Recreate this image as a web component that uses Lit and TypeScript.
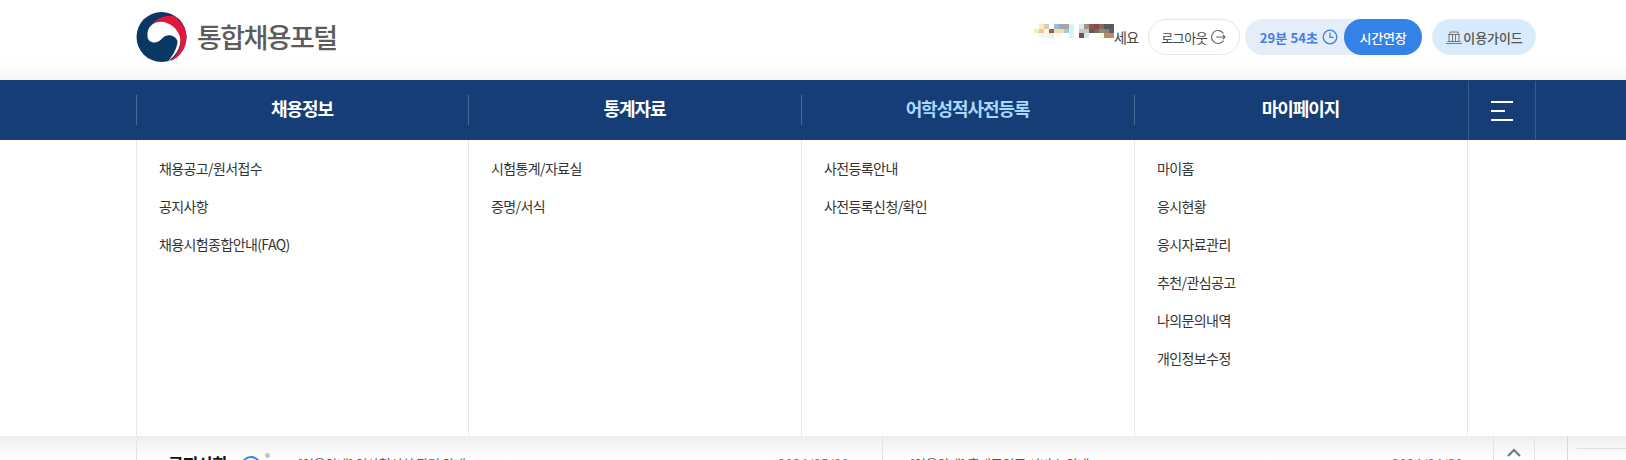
import { LitElement, html, css, svg } from "lit";
import { customElement } from "lit/decorators.js";

const COLS = [
  { title: "채용정보", items: ["채용공고/원서접수", "공지사항", "채용시험종합안내(FAQ)"] },
  { title: "통계자료", items: ["시험통계/자료실", "증명/서식"] },
  { title: "어학성적사전등록", active: true, items: ["사전등록안내", "사전등록신청/확인"] },
  { title: "마이페이지", items: ["마이홈", "응시현황", "응시자료관리", "추천/관심공고", "나의문의내역", "개인정보수정"] },
];

const MOSAIC = [
  "#fff #fbe9c4 #d9cfae #fff #8ebfe6 #a5a5a5 #a5a5a5 #d5f3f0 #fff #cfeff5 #a88c7c #8c5a52 #8a4a4a #8a6a60 #5a5a5a #5a5a5a",
  "#fde3b8 #f9c78e #fff #96604e #fcd9a2 #fcd9a2 #9bcdf2 #cff7ec #fff #c8c8c8 #c8c8c8 #7d5048 #6e6e6e #888 #8e7e74 #5a5a8a",
  "#fff #f0f8ff #fff5e0 #cff7ff #fff #fff #fff #d8f8ee #fff #7a5048 #c8eefc #fff #fff #fff9cc #c08a5a #c08a5a",
];

@customElement("app-root")
export class AppRoot extends LitElement {
  static styles = css`
    :host {
      display: block;
      width: 1626px;
      height: 460px;
      overflow: hidden;
      background: #fff;
      font-family: "Noto Sans CJK KR", "Noto Sans", sans-serif;
      color: #333;
    }
    .top {
      height: 80px;
      box-sizing: border-box;
      padding: 0 90px 0 136px;
      display: flex;
      align-items: center;
      background: linear-gradient(#fff 0, #fff 58px, #f6f6f6 80px);
    }
    .logo { display: flex; align-items: center; gap: 10px; margin-top: -6px; }
    .logo svg { display: block; }
    .logo span {
      font-size: 27px;
      font-weight: 500;
      color: #5c5c5c;
      letter-spacing: -1.6px;
      line-height: 40px;
    }
    .tools { margin-left: auto; display: flex; align-items: center; margin-top: -6px; }
    .hello { display: flex; align-items: center; font-size: 14px; letter-spacing: -0.5px; color: #444; }
    .mosaic { display: grid; grid-template-columns: repeat(16, 5px); grid-auto-rows: 4.5px; margin: -12px 0 0 0; }
    .mosaic i { display: block; }
    .pill {
      height: 36px;
      box-sizing: border-box;
      border-radius: 18px;
      display: flex;
      align-items: center;
      font-size: 13px;
      letter-spacing: -0.5px;
      white-space: nowrap;
    }
    .logout { margin-left: 9px; width: 92px; justify-content: center; gap: 3px; border: 1px solid #e6e6e6; background: #fff; color: #444; }
    .session { margin-left: 5px; background: #e5edf8; color: #3f7fe6; font-weight: 700; padding-left: 15px; letter-spacing: 0.1px; }
    .session svg { margin-left: 4px; }
    .extend {
      margin-left: 6px; width: 78px; height: 36px; border-radius: 18px; background: #3481e8; color: #fff;
      display: flex; align-items: center; justify-content: center; font-weight: 500; letter-spacing: -0.2px;
    }
    .guide { margin-left: 10px; width: 104px; justify-content: center; background: #d8ebfd; border: 1px solid #e2eefa; color: #555; font-weight: 500; letter-spacing: -0.1px; }
    nav {
      height: 60px;
      background: #163d75;
      padding-left: 136px;
      display: flex;
    }
    .nav-cols { display: grid; grid-template-columns: 332px 333px 333px 333px; }
    .nav-cols > div {
      display: flex; align-items: center; justify-content: center;
      position: relative;
      box-sizing: border-box;
      padding-bottom: 4px;
      color: #fff; font-size: 18px; font-weight: 700; letter-spacing: -1.1px;
    }
    .nav-cols > div::before {
      content: ""; position: absolute; left: 0; top: 15px; height: 30px; width: 1px; background: #4a6894;
    }
    .nav-cols > div.active { color: #a9d8ff; }
    .burger {
      margin-left: 1px; height: 59px; margin-top: 1px;
      border-left: 1px solid #3a5b8c; border-right: 1px solid #3a5b8c;
      display: flex; flex-direction: column; justify-content: center; gap: 7px; padding-left: 22px; box-sizing: content-box; width: 44px;
    }
    .burger i { display: block; height: 2px; background: #fff; width: 22px; }
    .burger i.short { width: 14px; }
    .menu {
      height: 296px; padding-left: 136px; display: grid;
      grid-template-columns: 332px 333px 333px 333px 1px; background: #fff;
    }
    .menu > div {
      border-left: 1px solid #e8e8e8; padding: 9px 0 0 22px; display: flex; flex-direction: column;
      box-sizing: border-box;
    }
    .menu a {
      height: 38px; line-height: 38px; font-size: 14px; color: #333; letter-spacing: -0.6px; white-space: nowrap;
    }
    .below {
      height: 24px; overflow: hidden; display: flex; padding-left: 136px;
      background: linear-gradient(#eeeeee, #ffffff);
    }
    .card {
      width: 1399px; height: 60px; box-sizing: border-box; flex: none;
      border-left: 1px solid #e2e2e2; border-right: 1px solid #e2e2e2; border-radius: 8px 8px 0 0; display: flex;
      font-size: 13px; color: #444;
    }
    .half {
      box-sizing: border-box; height: 60px; padding-top: 18px; display: flex;
      align-items: flex-start; line-height: 20px; white-space: nowrap;
    }
    .half.one { width: 746px; padding-left: 31px; border-right: 1px solid #e2e2e2; }
    .half.two { width: 611px; padding-left: 27px; border-right: 1px solid #e2e2e2; }
    .heading { font-size: 17px; font-weight: 700; color: #111; letter-spacing: -0.8px; width: 73px; line-height: 20px; }
    .ring { width: 20px; height: 20px; box-sizing: border-box; border: 2px solid #3f7fe6; border-radius: 50%; flex: none; margin: 2px 0 0 0; }
    .dot { width: 5px; height: 5px; border-radius: 50%; background: #c4c4c4; flex: none; margin: -1px 0 0 4px; }
    .subject { letter-spacing: -0.3px; color: #555; }
    .date { margin-left: auto; color: #777; letter-spacing: 0.3px; }
    .one .subject { margin-left: 28px; }
    .one .date { margin-right: 33px; }
    .two .date { margin-right: 30px; }
    .up { flex: 1; display: flex; justify-content: center; padding-top: 11px; }
    .side { margin-left: 32px; flex: 1; border-left: 1px solid #d8d8d8; padding: 12px 0 0 9px; }
    .side i { display: block; height: 1px; background: #e0e0e0; }
  `;
  render() {
    return html`
      <div class="top">
        <div class="logo">
          <svg width="51" height="50" viewBox="0 0 50 50">
            <circle cx="25" cy="25" r="25" fill="#0b3763" />
            <path d="M11 24 C10 15 17 9.5 25 9.5 C35 9.5 43 16 44 26 C44.5 36 39 44 32 48.5 C36 44 41 36 41 29 C39 24 33 22 29 24 C25 26 24 30 18 30.5 C14 30.5 11 28 11 24 Z" fill="#fff" />
            <path d="M15 12.5 C20 6 30 3 37 4 C46 10 50 18 50 25 C50 36 43 46 34 49 C42 42 45.5 33 43.5 25 C41 15 30 8.5 22 9.5 C19 10 17 11 15 12.5 Z" fill="#e1183c" />
          </svg>
          <span>통합채용포털</span>
        </div>
        <div class="tools">
          <div class="hello">
            <div class="mosaic">
              ${MOSAIC.flatMap((r) => r.split(" ")).map((c) => html`<i style="background:${c}"></i>`)}
            </div>
            <span>세요</span>
          </div>
          <div class="pill logout">
            <span>로그아웃</span>
            ${svg`<svg width="16" height="16" viewBox="0 0 16 16" fill="none" stroke="#666" stroke-width="1.2"><path d="M13.5 4.5A6.5 6.5 0 1 0 13.5 11.5"/><path d="M6 8h9M12.8 5.8 15 8l-2.2 2.2"/></svg>`}
          </div>
          <div class="pill session">
            <span>29분 54초</span>
            ${svg`<svg width="16" height="16" viewBox="0 0 16 16" fill="none" stroke="#3f7fe6" stroke-width="1.3"><circle cx="8" cy="8" r="6.8"/><path d="M8 3.8V8.4h3.6"/></svg>`}
            <div class="extend">시간연장</div>
          </div>
          <div class="pill guide">
            ${svg`<svg width="18" height="16" viewBox="0 0 18 16" fill="none" stroke="#777" stroke-width="1"><path d="M1 14.5h16M2.5 12.5h13M4 6v6.5M7.5 6v6.5M10.5 6v6.5M14 6v6.5M3 5.5h12M5 5.5V3h8v2.5"/></svg>`}
            <span>이용가이드</span>
          </div>
        </div>
      </div>
      <nav>
        <div class="nav-cols">
          ${COLS.map((c) => html`<div class=${c.active ? "active" : ""}>${c.title}</div>`)}
        </div>
        <div class="burger"><i></i><i class="short"></i><i></i></div>
      </nav>
      <div class="menu">
        ${COLS.map((c) => html`<div>${c.items.map((i) => html`<a>${i}</a>`)}</div>`)}
        <div></div>
      </div>
      <div class="below">
        <div class="card">
          <div class="half one">
            <span class="heading">공지사항</span><span class="ring"></span><span class="dot"></span>
            <span class="subject">[이용안내] 인사혁신처 관련 안내</span><span class="date">2024/05/08</span>
          </div>
          <div class="half two">
            <span class="subject">[이용안내] 휴대폰인증 서비스 안내</span><span class="date">2024/04/30</span>
          </div>
          <div class="up">
            ${svg`<svg width="16" height="10" viewBox="0 0 16 10" fill="none" stroke="#6b7a8a" stroke-width="2"><path d="M2 9 8 3l6 6"/></svg>`}
          </div>
        </div>
        <div class="side"><i></i></div>
      </div>
    `;
  }
}
